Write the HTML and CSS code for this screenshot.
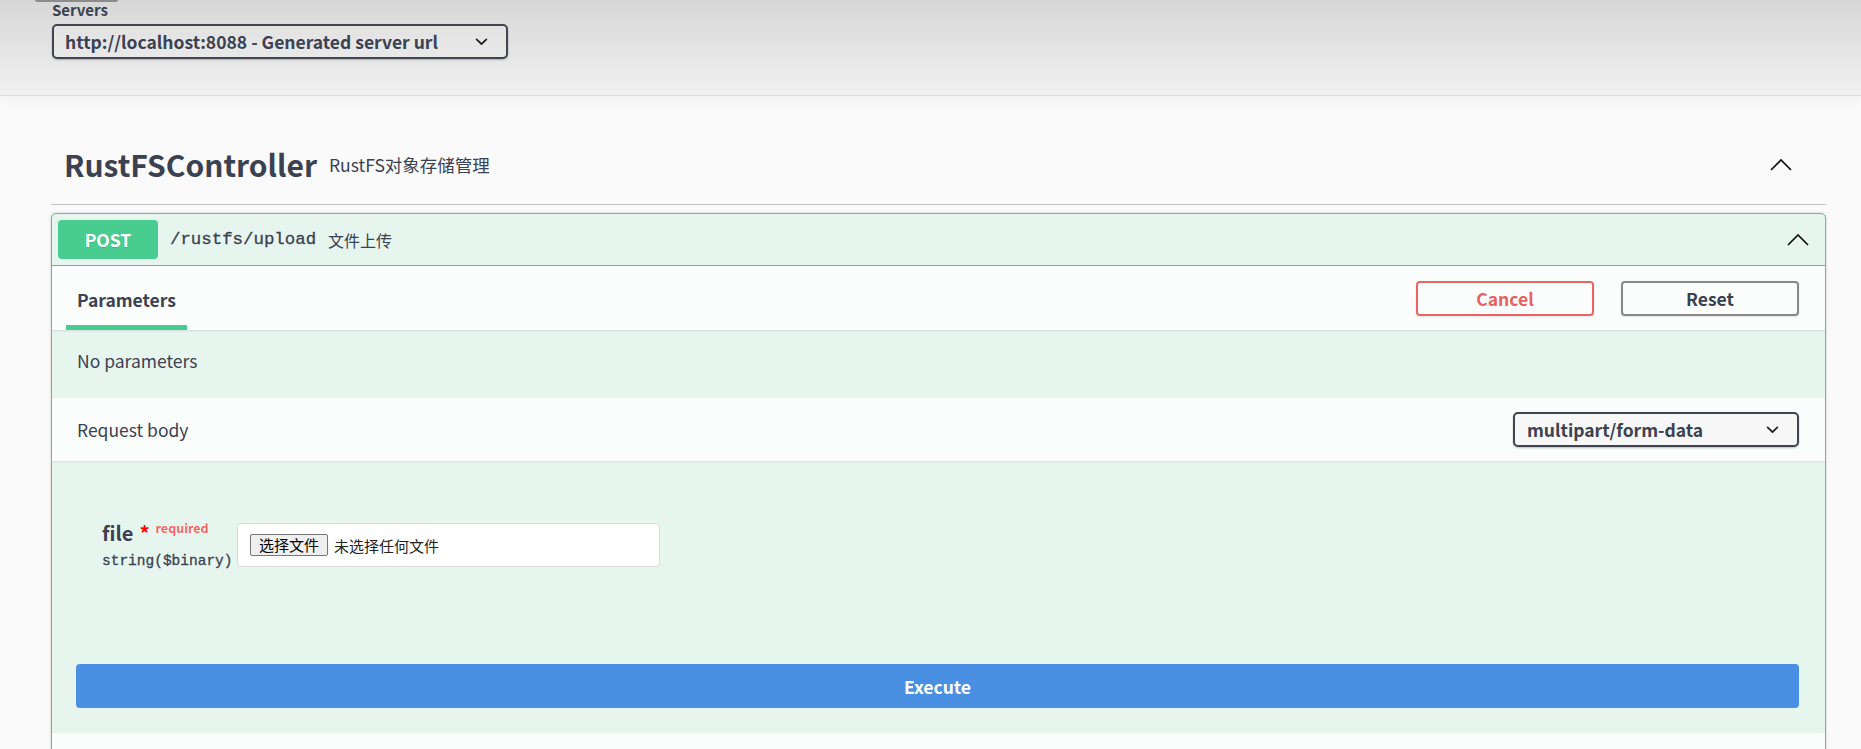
FILE: index.html
```html
<!DOCTYPE html>
<html lang="zh-CN">
<head>
    <meta charset="UTF-8">
    <meta name="viewport" content="width=device-width, initial-scale=1.0">
    <title>RustFS API</title>
    <link rel="stylesheet" href="styles.css">
</head>
<body>
    <!-- Выбор сервера -->
    <div class="scheme-container">
        <div class="scroll-tab"></div>
        <span class="servers-title">Servers</span>
        <div class="select server-select">
            <span>http://localhost:8088 - Generated server url</span>
            <svg viewBox="0 0 20 20"><path d="M13.418 7.859a.695.695 0 01.978 0 .68.68 0 010 .969l-3.908 3.83a.697.697 0 01-.979 0l-3.908-3.83a.68.68 0 010-.969.695.695 0 01.978 0L10 11l3.418-3.141z"/></svg>
        </div>
    </div>

    <div class="wrapper">
        <!-- Группа операций -->
        <div class="opblock-tag">
            <h3>RustFSController</h3>
            <small>RustFS对象存储管理</small>
            <svg class="arrow" viewBox="0 0 22 13"><polyline points="1,12 11,2 21,12"/></svg>
        </div>

        <div class="opblock">
            <div class="opblock-summary">
                <span class="method">POST</span>
                <span class="path">/rustfs/upload</span>
                <span class="summary-desc">文件上传</span>
                <svg class="arrow" viewBox="0 0 22 13"><polyline points="1,12 11,2 21,12"/></svg>
            </div>

            <div class="section-header">
                <div class="tab-item"><h4>Parameters</h4></div>
                <div class="try-out">
                    <button class="btn cancel">Cancel</button>
                    <button class="btn">Reset</button>
                </div>
            </div>

            <div class="description-wrapper">
                <p>No parameters</p>
            </div>

            <div class="section-header request-header">
                <h4>Request body</h4>
                <div class="select content-type">
                    <span>multipart/form-data</span>
                    <svg viewBox="0 0 20 20"><path d="M13.418 7.859a.695.695 0 01.978 0 .68.68 0 010 .969l-3.908 3.83a.697.697 0 01-.979 0l-3.908-3.83a.68.68 0 010-.969.695.695 0 01.978 0L10 11l3.418-3.141z"/></svg>
                </div>
            </div>

            <div class="request-body">
                <div class="param-row">
                    <div class="param-name">
                        <div class="name">file<span class="star">*</span><span class="required">required</span></div>
                        <div class="type">string($binary)</div>
                    </div>
                    <div class="file-input">
                        <button class="file-btn">选择文件</button>
                        <span>未选择任何文件</span>
                    </div>
                </div>
            </div>

            <div class="execute-wrapper">
                <button class="execute">Execute</button>
            </div>

            <!-- Заголовок блока ответов, дальше идёт за край -->
            <div class="section-header"></div>
        </div>
    </div>
</body>
</html>
```

FILE: styles.css
```css
/* Общие стили */
* {
    box-sizing: border-box;
}

body {
    margin: 0;
    background: #fafafa;
    color: #3b4151;
    font-family: "Noto Sans CJK SC", "Noto Sans", sans-serif;
    overflow: hidden;
}

h3, h4, p {
    margin: 0;
}

button {
    font-family: inherit;
    cursor: pointer;
}

/* Шапка с выбором сервера */
.scheme-container {
    height: 96px;
    padding-left: 52px;
    background: linear-gradient(#d7d7d7, #e2e2e2 45%, #f1f1f1);
    border-bottom: 1px solid #dcdcdc;
    box-shadow: 0 4px 14px rgba(0, 0, 0, 0.05);
}

.scroll-tab {
    width: 83px;
    height: 2px;
    margin-left: -17px;
    background: #8c8c8c;
    border-radius: 0 0 3px 3px;
}

.servers-title {
    display: block;
    font-size: 15px;
    font-weight: 700;
    line-height: 16px;
}

.select {
    display: flex;
    align-items: center;
    justify-content: space-between;
    height: 35px;
    padding: 0 12px 0 12px;
    border: 2px solid #41444e;
    border-radius: 5px;
    box-shadow: 0 1px 2px rgba(0, 0, 0, 0.25);
    font-size: 17.5px;
    font-weight: 700;
}

.select svg {
    width: 25px;
    height: 25px;
    fill: #222;
}

.server-select {
    width: 456px;
    margin-top: 6px;
    padding-left: 11px;
    background: rgba(240, 240, 240, 0.3);
}

/* Группа операций */
.wrapper {
    padding: 0 35px 0 51px;
}

.opblock-tag {
    display: flex;
    align-items: center;
    height: 81px;
    margin: 28px 0 8px;
    padding: 0 34px 0 13px;
    border-bottom: 1px solid rgba(59, 65, 81, 0.3);
}

.opblock-tag h3 {
    font-size: 30px;
    font-weight: 700;
}

.opblock-tag small {
    flex: 1;
    padding: 0 12px;
    font-size: 17.5px;
}

.arrow {
    width: 22px;
    height: 13px;
    fill: none;
    stroke: #111;
    stroke-width: 1.7;
}

/* Карточка операции POST */
.opblock {
    border: 1px solid #49cc90;
    border-radius: 5px;
    background: rgba(73, 204, 144, 0.1);
    box-shadow: 0 0 3px rgba(0, 0, 0, 0.19);
    overflow: hidden;
}

.opblock-summary {
    display: flex;
    align-items: center;
    padding: 6px 16px 6px 6px;
    border-bottom: 1px solid #49cc90;
}

.method {
    min-width: 100px;
    padding: 7px 0;
    line-height: 25px;
    text-align: center;
    background: #49cc90;
    color: #fff;
    font-size: 17.5px;
    font-weight: 700;
    border-radius: 4px;
    text-shadow: 0 1px 0 rgba(0, 0, 0, 0.1);
}

.path {
    padding: 0 12px;
    font-family: "Liberation Mono", monospace;
    font-size: 17.4px;
    -webkit-text-stroke: 0.3px #3b4151;
}

.summary-desc {
    flex: 1;
    font-size: 16px;
}

.section-header {
    display: flex;
    align-items: center;
    height: 64px;
    padding: 0 26px 0 14px;
    background: rgba(255, 255, 255, 0.8);
    box-shadow: 0 1px 2px rgba(0, 0, 0, 0.1);
}

.section-header h4 {
    font-size: 17.5px;
    font-weight: 700;
}

.tab-item {
    align-self: stretch;
    display: flex;
    align-items: center;
    padding: 8px 11px 0;
    border-bottom: 5px solid #49cc90;
}

.try-out {
    display: flex;
    gap: 27px;
    margin-left: auto;
}

.btn {
    width: 178px;
    height: 35px;
    background: transparent;
    border: 2px solid #888;
    border-radius: 4px;
    box-shadow: 0 1px 2px rgba(0, 0, 0, 0.1);
    color: #3b4151;
    font-size: 17.5px;
    font-weight: 700;
}

.btn.cancel {
    border-color: #ea6464;
    color: #e86161;
}

.description-wrapper {
    padding: 16px 25px 22px;
    font-size: 17.5px;
    line-height: 30px;
}

.request-header {
    height: 63px;
    padding-left: 25px;
}

.request-header h4 {
    font-weight: 400;
}

.content-type {
    width: 286px;
    margin-left: auto;
    background: #f7f7f7;
}

/* Поле загрузки файла */
.request-body {
    padding: 55px 25px 68px 50px;
}

.param-row {
    display: flex;
    align-items: flex-start;
}

.param-name {
    width: 135px;
}

.name {
    font-size: 20px;
    font-weight: 700;
    line-height: 24px;
}

.star {
    margin-left: 6px;
    color: #f00;
}

.required {
    padding: 0 6px;
    font-size: 12.5px;
    vertical-align: 8px;
    color: rgba(255, 0, 0, 0.6);
}

.type {
    margin-top: 6px;
    font-family: "Liberation Mono", monospace;
    font-size: 14.5px;
    -webkit-text-stroke: 0.3px #3b4151;
    line-height: 20px;
}

.file-input {
    display: flex;
    align-items: center;
    gap: 6px;
    width: 423px;
    margin-top: 7px;
    padding: 10px 12px;
    background: #fff;
    border: 1px solid #d9d9d9;
    border-radius: 4px;
    font-size: 15px;
    color: #222;
}

.file-btn {
    height: 22px;
    padding: 0 8px;
    background: #efefef;
    border: 1px solid #767676;
    border-radius: 2px;
    color: #000;
    font-size: 15px;
    line-height: 20px;
}

.execute-wrapper {
    padding: 25px 26px 25px 24px;
}

.execute {
    width: 100%;
    height: 44px;
    background: #4990e2;
    border: none;
    border-radius: 4px;
    color: #fff;
    font-size: 17.5px;
    font-weight: 700;
}
```
